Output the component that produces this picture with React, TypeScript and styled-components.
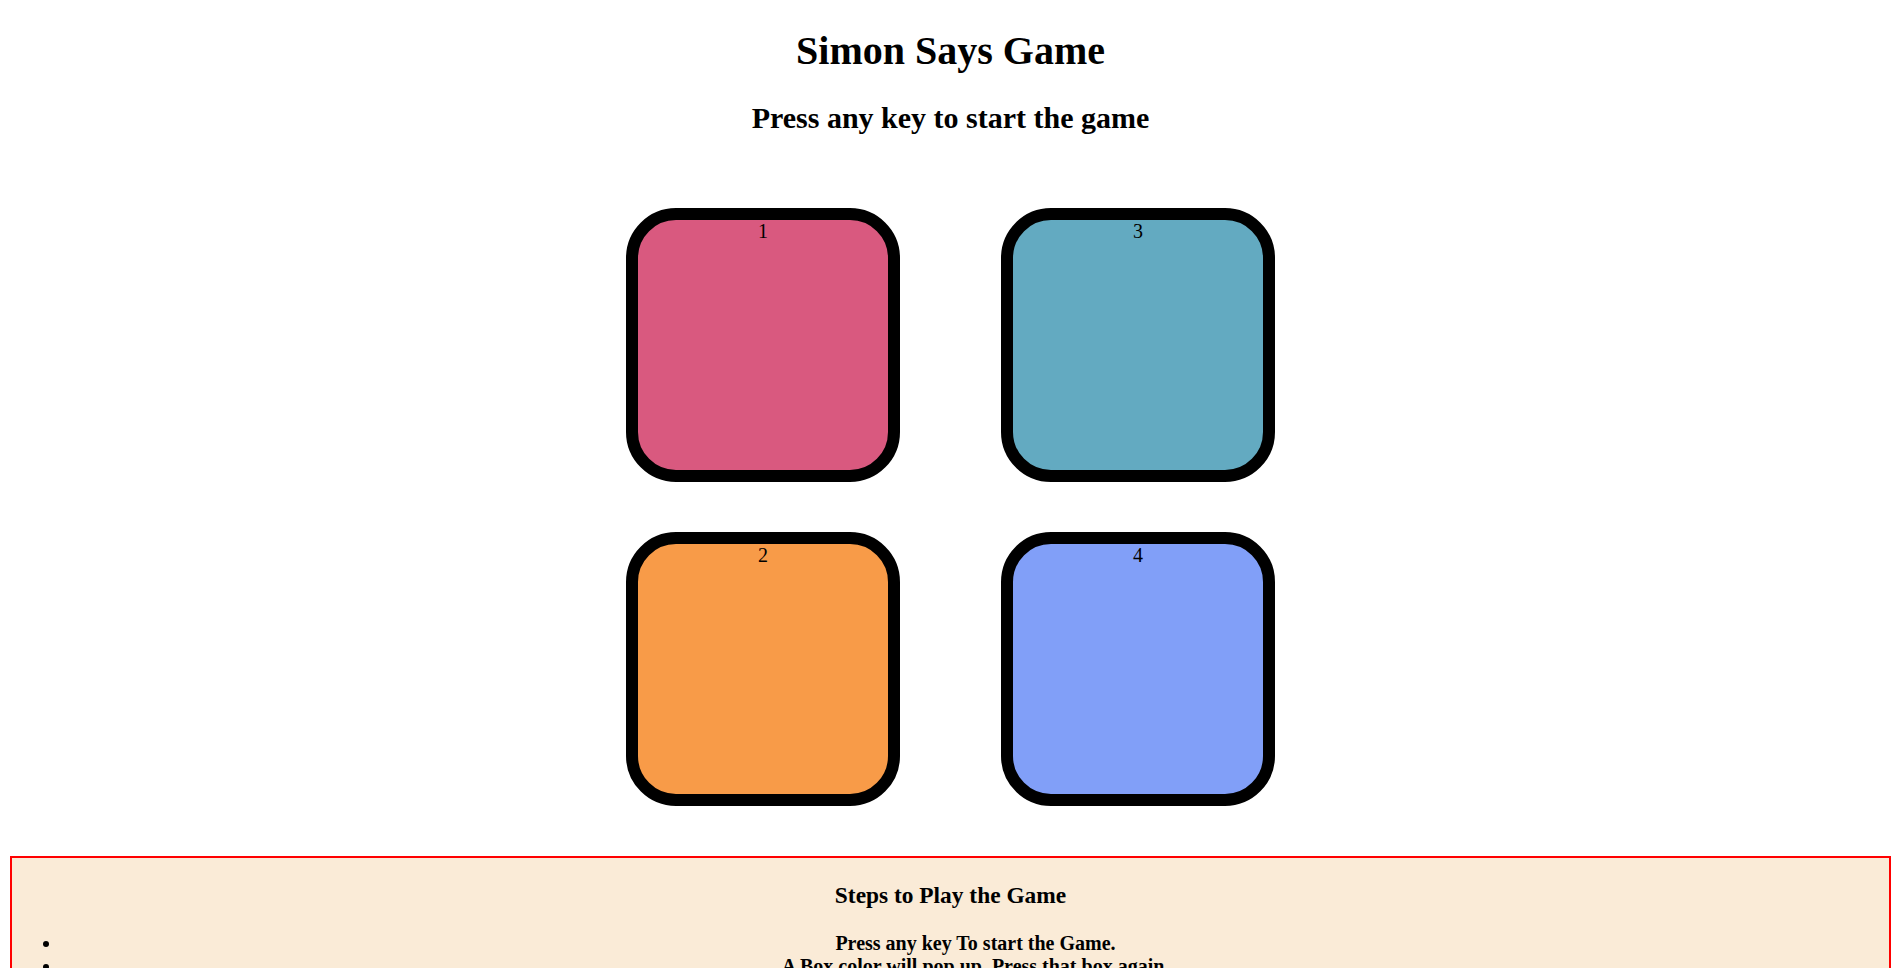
import React from "react";
import styled, { createGlobalStyle } from "styled-components";

const GlobalStyle = createGlobalStyle`
  html, body {
    background: #ffffff;
  }
  body {
    margin: 0 6px 10px 10px;
    font-family: "Liberation Serif", "Times New Roman", serif;
    font-size: 20px;
    color: #000000;
    text-align: center;
  }
`;

const Page = styled.main`
  display: flow-root;
`;

const Title = styled.h1`
  font-size: 40px;
  font-weight: bold;
  margin: 26.8px 0;
`;

const Status = styled.h2`
  font-size: 30px;
  font-weight: bold;
  margin: 24.9px 0;
`;

const Board = styled.div`
  display: grid;
  grid-template-columns: repeat(2, 274px);
  column-gap: 101px;
  row-gap: 50px;
  justify-content: center;
  padding: 49px 0 50px 0;
`;

const Pad = styled.div<{ $color: string }>`
  box-sizing: border-box;
  width: 274px;
  height: 274px;
  border: 12px solid #000000;
  border-radius: 50px;
  background: ${(p) => p.$color};
  font-size: 20px;
  text-align: center;
  cursor: pointer;
`;

const Steps = styled.section`
  box-sizing: border-box;
  width: 100%;
  background: antiquewhite;
  border: 2px solid #ff0000;
`;

const StepsTitle = styled.h3`
  font-size: 23.4px;
  font-weight: bold;
  margin: 23.4px 0;
`;

const StepList = styled.ul`
  margin: 20px 0;
  padding-left: 50px;
  font-weight: bold;
`;

const Step = styled.li`
  text-align: center;
`;

const pads = [
  { id: 1, color: "#d9597f" },
  { id: 3, color: "#63aac1" },
  { id: 2, color: "#f89b48" },
  { id: 4, color: "#819ff8" },
];

const steps = [
  "Press any key To start the Game.",
  "A Box color will pop up. Press that box again.",
  "Then a new Box will pop up, press the sequence from the start.",
  "If you press the wrong box, the game is over.",
];

export default function App() {
  return (
    <Page>
      <GlobalStyle />
      <Title>Simon Says Game</Title>
      <Status>Press any key to start the game</Status>
      <Board>
        {pads.map((p) => (
          <Pad key={p.id} $color={p.color}>
            {p.id}
          </Pad>
        ))}
      </Board>
      <Steps>
        <StepsTitle>Steps to Play the Game</StepsTitle>
        <StepList>
          {steps.map((s) => (
            <Step key={s}>{s}</Step>
          ))}
        </StepList>
      </Steps>
    </Page>
  );
}
